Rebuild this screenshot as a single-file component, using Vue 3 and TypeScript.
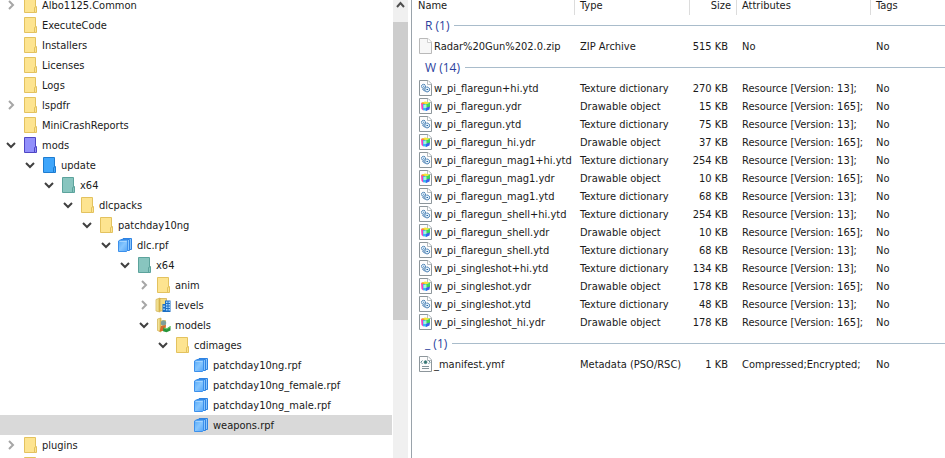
<script setup lang="ts">
import { computed, ref } from 'vue'

type NodeIcon = 'folder' | 'mods' | 'update' | 'teal' | 'rpf' | 'levels' | 'models'
type FileIcon = 'blank' | 'texture' | 'drawable' | 'meta'

interface TreeNode {
  id: number
  depth: number
  label: string
  icon: NodeIcon
  expandable: boolean
}

interface FileEntry {
  name: string
  type: string
  size: string
  attributes: string
  icon: FileIcon
}

interface FileGroup {
  title: string
  files: FileEntry[]
}

const node = (id: number, depth: number, label: string, icon: NodeIcon = 'folder', expandable = false): TreeNode =>
  ({ id, depth, label, icon, expandable })

const nodes: TreeNode[] = [
  node(1, 0, 'Albo1125.Common', 'folder', true),
  node(2, 0, 'ExecuteCode'),
  node(3, 0, 'Installers'),
  node(4, 0, 'Licenses'),
  node(5, 0, 'Logs'),
  node(6, 0, 'lspdfr', 'folder', true),
  node(7, 0, 'MiniCrashReports'),
  node(8, 0, 'mods', 'mods', true),
  node(9, 1, 'update', 'update', true),
  node(10, 2, 'x64', 'teal', true),
  node(11, 3, 'dlcpacks', 'folder', true),
  node(12, 4, 'patchday10ng', 'folder', true),
  node(13, 5, 'dlc.rpf', 'rpf', true),
  node(14, 6, 'x64', 'teal', true),
  node(15, 7, 'anim', 'folder', true),
  node(16, 7, 'levels', 'levels', true),
  node(17, 7, 'models', 'models', true),
  node(18, 8, 'cdimages', 'folder', true),
  node(19, 9, 'patchday10ng.rpf', 'rpf'),
  node(20, 9, 'patchday10ng_female.rpf', 'rpf'),
  node(21, 9, 'patchday10ng_male.rpf', 'rpf'),
  node(22, 9, 'weapons.rpf', 'rpf'),
  node(23, 0, 'plugins', 'folder', true),
  node(24, 0, ''),
]

const expanded = ref<number[]>([8, 9, 10, 11, 12, 13, 14, 17, 18])
const selected = ref(22)

const visibleNodes = computed(() => {
  const out: TreeNode[] = []
  let hiddenBelow = Infinity
  for (const n of nodes) {
    if (n.depth > hiddenBelow) continue
    hiddenBelow = n.expandable && !expanded.value.includes(n.id) ? n.depth : Infinity
    out.push(n)
  }
  return out
})

function toggle(id: number) {
  expanded.value = expanded.value.includes(id)
    ? expanded.value.filter((e) => e !== id)
    : [...expanded.value, id]
}

const texture = (name: string, size: string): FileEntry =>
  ({ name, type: 'Texture dictionary', size, attributes: 'Resource [Version: 13];', icon: 'texture' })
const drawable = (name: string, size: string): FileEntry =>
  ({ name, type: 'Drawable object', size, attributes: 'Resource [Version: 165];', icon: 'drawable' })

const groups: FileGroup[] = [
  {
    title: 'R (1)',
    files: [{ name: 'Radar%20Gun%202.0.zip', type: 'ZIP Archive', size: '515 KB', attributes: 'No', icon: 'blank' }],
  },
  {
    title: 'W (14)',
    files: [
      texture('w_pi_flaregun+hi.ytd', '270 KB'),
      drawable('w_pi_flaregun.ydr', '15 KB'),
      texture('w_pi_flaregun.ytd', '75 KB'),
      drawable('w_pi_flaregun_hi.ydr', '37 KB'),
      texture('w_pi_flaregun_mag1+hi.ytd', '254 KB'),
      drawable('w_pi_flaregun_mag1.ydr', '10 KB'),
      texture('w_pi_flaregun_mag1.ytd', '68 KB'),
      texture('w_pi_flaregun_shell+hi.ytd', '254 KB'),
      drawable('w_pi_flaregun_shell.ydr', '10 KB'),
      texture('w_pi_flaregun_shell.ytd', '68 KB'),
      texture('w_pi_singleshot+hi.ytd', '134 KB'),
      drawable('w_pi_singleshot.ydr', '178 KB'),
      texture('w_pi_singleshot.ytd', '48 KB'),
      drawable('w_pi_singleshot_hi.ydr', '178 KB'),
    ],
  },
  {
    title: '_ (1)',
    files: [
      { name: '_manifest.ymf', type: 'Metadata (PSO/RSC)', size: '1 KB', attributes: 'Compressed;Encrypted;', icon: 'meta' },
    ],
  },
]
</script>

<template>
  <main class="explorer">
    <svg class="defs" width="0" height="0" aria-hidden="true">
      <defs>
        <linearGradient id="rpfFace" x1="0" y1="0" x2="1" y2="1">
          <stop offset="0" stop-color="#56a9f8" />
          <stop offset="0.5" stop-color="#86c6fe" />
          <stop offset="1" stop-color="#55a5f8" />
        </linearGradient>
        <linearGradient id="bookFace" x1="0" y1="0" x2="1" y2="0">
          <stop offset="0" stop-color="#fdf3b4" />
          <stop offset="1" stop-color="#d9b94e" />
        </linearGradient>
      </defs>
    </svg>

    <nav class="tree-pane" aria-label="Folders">
      <ul class="tree" role="tree">
        <li
          v-for="n in visibleNodes"
          :key="n.id"
          class="node"
          role="treeitem"
          :aria-selected="n.id === selected"
          :class="{ selected: n.id === selected }"
          :style="{ '--depth': n.depth }"
        >
          <button
            v-if="n.expandable"
            type="button"
            class="twisty"
            :class="{ open: expanded.includes(n.id) }"
            :aria-label="n.label"
            @click="toggle(n.id)"
          >
            <svg width="16" height="16" viewBox="0 0 16 16" fill="none" stroke="currentColor" stroke-width="2">
              <path v-if="expanded.includes(n.id)" d="M4 6l4 4 4-4" />
              <path v-else d="M6 4l4 4-4 4" />
            </svg>
          </button>
          <span v-else class="twisty"></span>

          <button type="button" class="entry" @click="selected = n.id">
            <svg v-if="n.icon === 'rpf'" width="16" height="16" viewBox="0 0 16 16">
              <path d="M6 1.500h8.500v11H6z" fill="#8ac6fc" stroke="#2f83e2" />
              <path d="M4 2.500h8.500v11H4z" fill="#8ac6fc" stroke="#2f83e2" />
              <path d="M1.500 4l1.500-1h7.500v10.500l-1 1h-8z" fill="url(#rpfFace)" stroke="#3c90ec" />
              <path d="M2.500 4.500h7" stroke="#b3dbfe" stroke-width="0.800" />
            </svg>
            <svg v-else-if="n.icon === 'levels'" width="16" height="16" viewBox="0 0 16 16">
              <path d="M1 2.500L5 1v14l-4-1z" fill="url(#bookFace)" stroke="#cfae49" stroke-width="0.700" />
              <path d="M5 1.500h6.500V14H5z" fill="#f3dc83" stroke="#cfa842" stroke-width="0.700" />
              <path d="M7.500 7H10V3.500h5.500V15h-8z" fill="#1c6fc4" />
              <path d="M11 4.500h1.500V6H11zM13.500 4.500H15V6h-1.500zM11 7h1.500v1.500H11zM13.500 7H15v1.500h-1.500zM8.300 8.500h1.500V10H8.300zM11 9.500h1.500V11H11zM13.500 9.500H15V11h-1.500zM8.300 11.500h1.500V13H8.300zM11 12h1.500v1.500H11zM13.500 12H15v1.500h-1.500z" fill="#a9d8ff" />
            </svg>
            <svg v-else-if="n.icon === 'models'" width="16" height="16" viewBox="0 0 16 16">
              <path d="M2.500 2L6 1v14l-3.500-1.500z" fill="url(#bookFace)" stroke="#cfae49" stroke-width="0.700" />
              <path d="M6 3h5v9H6z" fill="#f2d77e" />
              <circle cx="8.500" cy="6" r="2.700" fill="#7f9f98" />
              <path d="M4.500 14.500L6 9l5-1-1 5.500z" fill="#d66a2c" />
              <path d="M8.500 10.500l3 1L15.500 9v4.500l-4 1.800-3.500-1z" fill="#27963a" />
              <path d="M9 11l3 1 3.500-2.500" fill="none" stroke="#6fd36b" stroke-width="0.900" />
            </svg>
            <svg v-else class="folder" :class="n.icon" width="16" height="16" viewBox="0 0 16 16">
              <path class="body" d="M2.500 0.500h11v15h-11z" />
              <path class="body" d="M12.500 10.500l2-1v6h-2z" />
            </svg>
            <span class="label">{{ n.label }}</span>
          </button>
        </li>
      </ul>
      <div class="scrollbar" aria-hidden="true">
        <div class="scroll-up">
          <svg width="15" height="12" viewBox="0 0 15 12" fill="none" stroke="#505050" stroke-width="2">
            <path d="M4 7l3.500-4L11 7" />
          </svg>
        </div>
        <div class="thumb"></div>
      </div>
    </nav>

    <section class="list-pane" aria-label="Files">
      <table class="files">
        <colgroup>
          <col class="c-name" />
          <col class="c-type" />
          <col class="c-size" />
          <col class="c-attr" />
          <col />
        </colgroup>
        <thead>
          <tr>
            <th scope="col" class="first">Name</th>
            <th scope="col">Type</th>
            <th scope="col" class="num">Size</th>
            <th scope="col">Attributes</th>
            <th scope="col">Tags</th>
          </tr>
        </thead>
        <tbody v-for="g in groups" :key="g.title">
          <tr class="group">
            <th colspan="5" scope="rowgroup">
              <div class="group-title">{{ g.title }}</div>
            </th>
          </tr>
          <tr v-for="f in g.files" :key="f.name">
            <td class="name">
              <div class="file">
                <svg width="13" height="16" viewBox="0 0 13 16">
                  <path d="M0.500 0.500h8.500l3.500 3.500v11.500h-12z" :fill="f.icon === 'blank' ? '#f7f7f7' : '#fdfdfd'" :stroke="f.icon === 'blank' ? '#b9b9b9' : '#8d969b'" />
                  <path d="M8.500 0.500v4h4" fill="#fff" :stroke="f.icon === 'blank' ? '#c4c4c4' : '#a3abaf'" stroke-width="0.800" />
                  <g v-if="f.icon === 'texture'" fill="#e4f2fc" stroke="#2566a4">
                    <circle cx="4.500" cy="6.300" r="2" stroke-dasharray="1.400 0.400" />
                    <circle cx="8.200" cy="9.500" r="2.400" stroke-dasharray="1.500 0.400" />
                    <path d="M3.500 9l2.500 2.500M4.300 6.300h0.800M7.500 9.500h1.500" />
                  </g>
                  <g v-else-if="f.icon === 'drawable'">
                    <path d="M2 5l4-1.500L11 4.500 7 6.500z" fill="#eee63b" />
                    <path d="M2 5l2.500 0.800v7L2.500 11z" fill="#f03cc4" />
                    <path d="M4 4.300L6.500 6.500 4.500 7 2 5z" fill="#ff8d35" />
                    <path d="M4 6l3.500 0.500v6.500l-3.500-1z" fill="#35b8f2" />
                    <path d="M7 6.500L11 4.500v4.500L7 10z" fill="#3ed957" />
                    <path d="M7 9.500L11 8.500l-0.500 3-3.500 1.500z" fill="#3d63ea" />
                    <path d="M4.500 7h3v3h-3z" fill="#a6f5dc" />
                  </g>
                  <g v-else-if="f.icon === 'meta'" fill="none" stroke="#477d86">
                    <path d="M3.500 4.500L1.800 6.200l1.700 1.700M9.500 4.500l1.700 1.700-1.700 1.700" stroke-width="0.900" />
                    <circle cx="6.500" cy="6.200" r="1.400" fill="#2f7a66" />
                    <path d="M3 10.500h7M3 12.500h7" stroke="#84949a" />
                  </g>
                </svg>
                <span class="label">{{ f.name }}</span>
              </div>
            </td>
            <td>{{ f.type }}</td>
            <td class="num">{{ f.size }}</td>
            <td>{{ f.attributes }}</td>
            <td>No</td>
          </tr>
        </tbody>
      </table>
    </section>
  </main>
</template>

<style>
body {
  margin: 0;
  background: #fff;
}
</style>

<style scoped>
.explorer {
  display: grid;
  grid-template-columns: 412fr 533fr;
  height: 100vh;
  overflow: hidden;
  color: #1a1a1a;
  font: 11px/16px Tahoma, "DejaVu Sans Condensed", sans-serif;
  white-space: nowrap;
}

.defs {
  position: absolute;
}

.tree-pane {
  display: flex;
  min-width: 0;
  min-height: 0;
  gap: 1px;
  padding-right: 3px;
  border-right: 1px solid #9aa3ab;
}

.tree {
  flex: 1;
  min-width: 0;
  margin: -5px 0 0;
  padding: 0;
  list-style: none;
}

.node {
  display: flex;
  align-items: center;
  height: 20px;
  padding-left: calc(3px + var(--depth) * 19px);
}

.node.selected {
  background: #d9d9d9;
}

button {
  margin: 0;
  padding: 0;
  border: 0;
  background: none;
  color: inherit;
  font: inherit;
}

.twisty {
  display: flex;
  width: 16px;
  height: 16px;
  margin-right: 3px;
  color: #a6a6a6;
}

.twisty.open {
  color: #404040;
}

.entry {
  display: flex;
  align-items: center;
  gap: 4px;
}

.label {
  padding-top: 2px;
}

.folder .body {
  fill: #fde490;
  stroke: #e3c25f;
}

.folder.mods .body {
  fill: #918ffb;
  stroke: #4f46c4;
}

.folder.update .body {
  fill: #3fa6fb;
  stroke: #1e7cd0;
}

.folder.teal .body {
  fill: #88c5bf;
  stroke: #5ca39c;
}

.scrollbar {
  display: flex;
  flex-direction: column;
  width: 15px;
  background: #f0f0f0;
}

.scroll-up {
  height: 22px;
}

.scroll-up svg {
  display: block;
}

.thumb {
  height: 65%;
  background: #cdcdcd;
}

.list-pane {
  min-width: 0;
  overflow: hidden;
}

.files {
  width: 100%;
  table-layout: fixed;
  border-collapse: separate;
  border-spacing: 0;
}

.c-name {
  width: 163px;
}

.c-type {
  width: 115px;
}

.c-size {
  width: 47px;
}

.c-attr {
  width: 134px;
}

th,
td {
  box-sizing: border-box;
  padding: 0 5px;
  font-weight: normal;
  text-align: left;
}

td {
  height: 18px;
  padding-top: 2px;
}

thead th {
  height: 15px;
  padding-bottom: 3px;
  border-right: 1px solid #dcdcdc;
  line-height: 12px;
}

thead th:last-child {
  border-right: 0;
}

thead .first {
  padding-left: 6px;
}

.num {
  padding-right: 9px;
  padding-left: 0;
  text-align: right;
}

thead .num {
  padding-right: 5px;
}

.group th {
  height: 24px;
  padding: 0;
  vertical-align: bottom;
}

tbody:first-of-type .group th {
  height: 22px;
}

.group-title {
  display: flex;
  align-items: center;
  gap: 5px;
  height: 21px;
  padding: 0 0 1px 13px;
  color: #2b3f9e;
  font: 12px/21px "Segoe UI", "Open Sans", sans-serif;
}

.group-title::after {
  content: "";
  flex: 1;
  height: 1px;
  background: #a9bccb;
}

.name {
  padding: 0 0 0 7px;
}

.file {
  display: flex;
  align-items: center;
  gap: 2px;
}
</style>
